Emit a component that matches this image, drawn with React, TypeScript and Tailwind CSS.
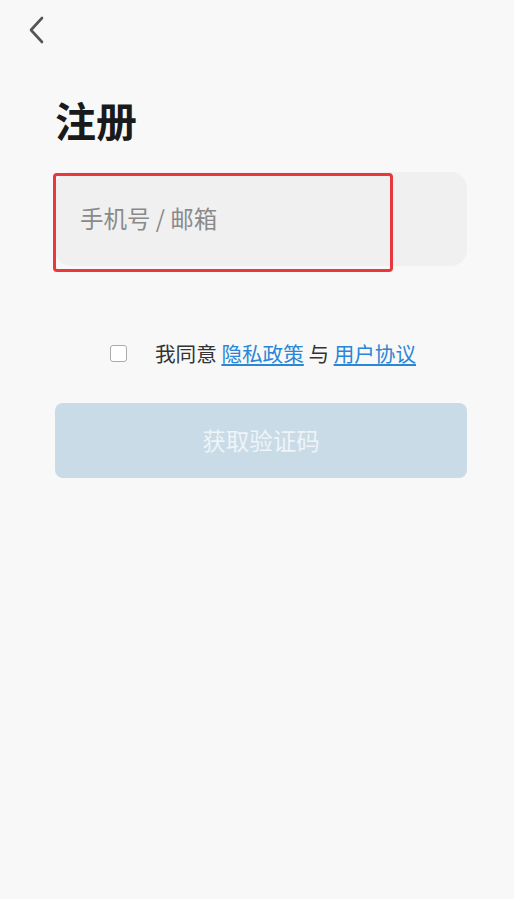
import React, { useState } from "react";

const font = { fontFamily: '"Noto Sans CJK SC", "Noto Sans", sans-serif' };

export default function App() {
  const [agreed, setAgreed] = useState(false);

  return (
    <div className="min-h-screen w-full bg-[#f8f8f8]" style={font}>
      {/* header */}
      <div className="flex h-[60px] items-center pl-[26px]">
        <button className="flex h-[30px] w-[20px] items-center justify-center">
          <svg width="16" height="28" viewBox="0 0 16 28" fill="none">
            <path
              d="M14 2 L3 14 L14 26"
              stroke="#555"
              strokeWidth="2.6"
              strokeLinecap="round"
              strokeLinejoin="round"
            />
          </svg>
        </button>
      </div>

      <div className="pl-[55px] pr-[47px]">
        {/* title */}
        <div className="mt-[31px] flex h-[56px] items-center">
          <h1 className="text-[41px] font-bold leading-none text-[#1a1a1a]">注册</h1>
        </div>

        {/* account input */}
        <div className="relative mt-[25px]">
          <div className="flex h-[94px] items-center rounded-2xl bg-[#f0f0f0] px-[25px]">
            <input
              className="w-full bg-transparent text-[23.5px] text-[#333] outline-none placeholder:text-[#8a8a8a]"
              placeholder="手机号 / 邮箱"
            />
          </div>
          <div className="pointer-events-none absolute left-[-2px] top-[1px] h-[99px] w-[340px] rounded-[4px] border-[3px] border-[#e8383d]" />
        </div>

        {/* agreement */}
        <div className="mt-[67px] flex h-[40px] items-center justify-center gap-[28px] pl-[4px]">
          <button
            onClick={() => setAgreed(!agreed)}
            className={`h-[17px] w-[17px] rounded-[3px] border-[1.5px] ${
              agreed ? "border-[#2a8ad8] bg-[#2a8ad8]" : "border-[#ababab] bg-white"
            }`}
          />
          <p className="text-[20.6px] text-[#333]">
            我同意{" "}
            <a href="#" className="text-[#2a86d6] underline underline-offset-2">
              隐私政策
            </a>{" "}
            与{" "}
            <a href="#" className="text-[#2a86d6] underline underline-offset-2">
              用户协议
            </a>
          </p>
        </div>

        {/* submit */}
        <button className="mt-[30px] flex h-[75px] w-full items-center justify-center rounded-lg bg-[#c8dbe7] text-[23.5px] text-[#eef4f8]">
          获取验证码
        </button>
      </div>
    </div>
  );
}
